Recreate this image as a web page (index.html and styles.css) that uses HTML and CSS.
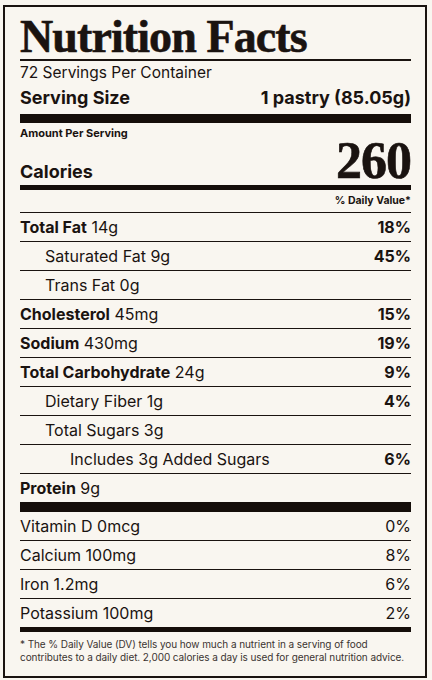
FILE: index.html
```html
<!DOCTYPE html>
<html lang="en">
<head>
<meta charset="utf-8">
<title>Nutrition Facts</title>
<link rel="stylesheet" href="styles.css">
</head>
<body>
<section class="label">
  <h1 class="title">Nutrition Facts</h1>
  <div class="servings">72 Servings Per Container</div>
  <div class="serving-size"><span>Serving Size</span><span>1 pastry (85.05g)</span></div>
  <div class="bar bar-xl"></div>
  <div class="amount">Amount Per Serving</div>
  <div class="calories"><span class="cal-label">Calories</span><span class="cal-value">260</span></div>
  <div class="bar bar-md"></div>
  <div class="dv-head">% Daily Value*</div>

  <div class="row"><span><b>Total Fat</b> 14g</span><span class="pct">18%</span></div>
  <div class="row indent1"><span>Saturated Fat 9g</span><span class="pct">45%</span></div>
  <div class="row indent1"><span>Trans Fat 0g</span><span class="pct"></span></div>
  <div class="row"><span><b>Cholesterol</b> 45mg</span><span class="pct">15%</span></div>
  <div class="row"><span><b>Sodium</b> 430mg</span><span class="pct">19%</span></div>
  <div class="row"><span><b>Total Carbohydrate</b> 24g</span><span class="pct">9%</span></div>
  <div class="row indent1"><span>Dietary Fiber 1g</span><span class="pct">4%</span></div>
  <div class="row indent1"><span>Total Sugars 3g</span><span class="pct"></span></div>
  <div class="row indent2"><span>Includes 3g Added Sugars</span><span class="pct">6%</span></div>
  <div class="row no-line"><span><b>Protein</b> 9g</span><span class="pct"></span></div>
  <div class="bar bar-lg"></div>

  <div class="row vit"><span>Vitamin D 0mcg</span><span class="pct">0%</span></div>
  <div class="row vit"><span>Calcium 100mg</span><span class="pct">8%</span></div>
  <div class="row vit"><span>Iron 1.2mg</span><span class="pct">6%</span></div>
  <div class="row vit no-line"><span>Potassium 100mg</span><span class="pct">2%</span></div>
  <div class="bar bar-md"></div>

  <p class="footnote">* The % Daily Value (DV) tells you how much a nutrient in a serving of food<br>contributes to a daily diet. 2,000 calories a day is used for general nutrition advice.</p>
</section>
</body>
</html>
```

FILE: styles.css
```css
html, body {
  margin: 0;
  padding: 0;
  background: #f9f6f0;
}

body {
  color: #1a1310;
  font-family: Inter, "Noto Sans", sans-serif;
}

.label {
  margin: 5px 5px 3px 3px;
  width: 424px;
  box-sizing: border-box;
  border: 2px solid #1a1310;
  padding: 0 14px 12px 15px;
}

.title {
  margin: 0;
  padding-top: 8px;
  font-family: "Liberation Serif", "Times New Roman", serif;
  font-weight: 700;
  font-size: 46px;
  line-height: 44px;
  letter-spacing: -0.9px;
  -webkit-text-stroke: 0.6px #1a1310;
  border-bottom: 2px solid #1a1310;
}

.servings {
  padding-top: 2px;
  font-size: 15.5px;
  line-height: 20px;
}

.serving-size {
  margin-top: 3px;
  display: flex;
  justify-content: space-between;
  font-size: 18px;
  font-weight: 700;
  line-height: 24px;
}

.bar {
  background: #150e0a;
}
.bar-xl { height: 9px; margin-top: 4px; }
.bar-lg { height: 10px; }
.bar-md { height: 5px; }

.amount {
  padding-top: 3px;
  font-size: 11px;
  font-weight: 700;
  line-height: 14px;
}

.calories {
  display: flex;
  justify-content: space-between;
  align-items: baseline;
  height: 45px;
  box-sizing: border-box;
  padding-bottom: 4px;
}

.cal-label {
  font-size: 18px;
  font-weight: 700;
}

.cal-value {
  font-family: "Liberation Serif", "Times New Roman", serif;
  font-weight: 700;
  font-size: 52px;
  line-height: 41px;
  letter-spacing: -1px;
  -webkit-text-stroke: 0.6px #1a1310;
}

.dv-head {
  text-align: right;
  font-size: 10.5px;
  font-weight: 700;
  line-height: 22px;
  border-bottom: 1px solid #1a1310;
}

.row {
  display: flex;
  justify-content: space-between;
  height: 28px;
  line-height: 28px;
  font-size: 16px;
  border-bottom: 1px solid #1a1310;
}

.row b {
  font-weight: 700;
}

.row .pct {
  font-weight: 700;
}

.row.vit .pct {
  font-weight: 400;
}

.row.no-line {
  border-bottom: none;
}

.indent1 { padding-left: 25px; }
.indent2 { padding-left: 50px; }

.footnote {
  margin: 0;
  padding-top: 6px;
  font-size: 10px;
  line-height: 13px;
  letter-spacing: -0.08px;
  color: #3b3430;
  white-space: nowrap;
}
```
